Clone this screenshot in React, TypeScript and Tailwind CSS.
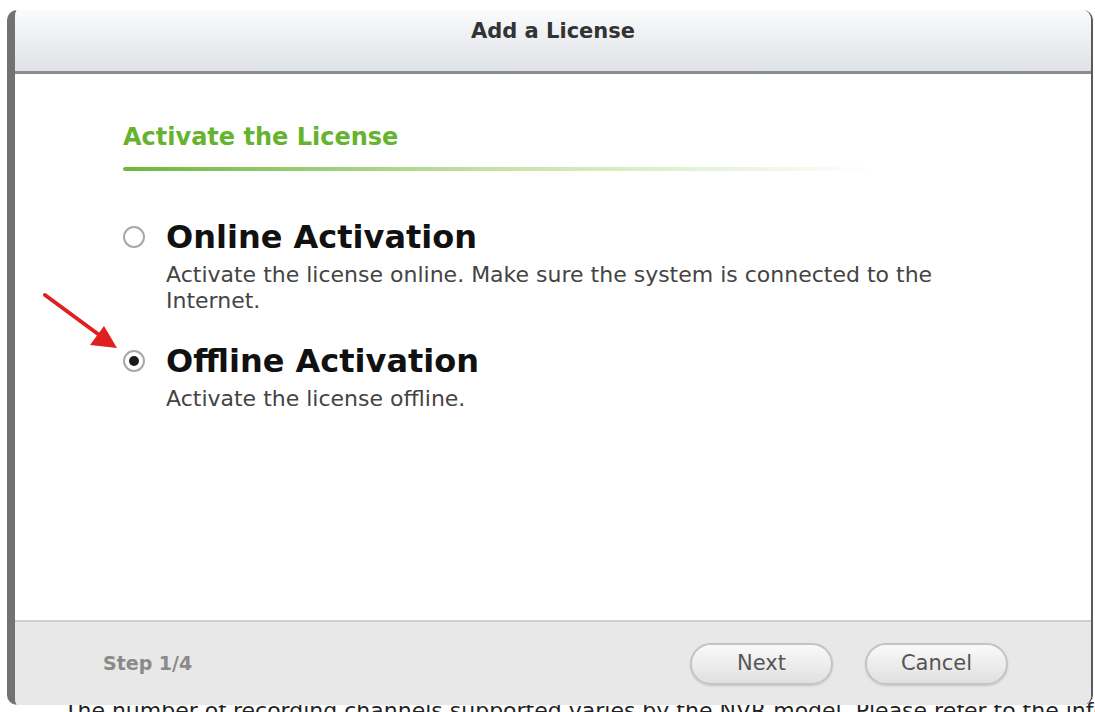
import React from "react";

function Radio({ checked }: { checked?: boolean }) {
  return (
    <span className="flex h-[22px] w-[22px] shrink-0 items-center justify-center rounded-full border-2 border-[#a8a8a8] bg-white">
      {checked && <span className="h-[10px] w-[10px] rounded-full bg-[#1a1a1a]" />}
    </span>
  );
}

function PillButton({ label }: { label: string }) {
  return (
    <button className="h-[42px] w-[143px] rounded-full border-2 border-[#c4c4c4] bg-gradient-to-b from-[#fafafa] to-[#e0e0e0] text-[21px] text-[#555] shadow-[0_1px_2px_rgba(0,0,0,0.15)]">
      {label}
    </button>
  );
}

const options = [
  {
    title: "Online Activation",
    desc: "Activate the license online. Make sure the system is connected to the Internet.",
    checked: false,
  },
  {
    title: "Offline Activation",
    desc: "Activate the license offline.",
    checked: true,
  },
];

export default function App() {
  return (
    <div className="relative h-[712px] w-[1095px] overflow-hidden bg-white font-['DejaVu_Sans',sans-serif]">
      <div className="relative z-10 ml-[7px] mt-[10px] flex h-[695px] w-[1086px] flex-col overflow-hidden rounded-[10px] border-l-[8px] border-r-2 border-l-[#727272] border-r-[#5a5a5a] bg-white">
        {/* title bar */}
        <div className="flex h-[64px] shrink-0 justify-center border-b-[3px] border-[#8c8c8c] bg-gradient-to-b from-[#fafbfc] to-[#dfe2e6] pt-[7px]">
          <span className="text-[21px] font-bold leading-[28px] text-[#333]">Add a License</span>
        </div>

        {/* body */}
        <div className="flex-1 pl-[108px] pt-[48px]">
          <h2 className="text-[24px] font-bold leading-[30px] text-[#66b32e]">Activate the License</h2>
          <div className="mt-[15px] h-[4px] w-[750px] rounded-full bg-gradient-to-r from-[#6fb63a] via-[#c6e3a8] to-transparent" />

          <div className="mt-[48px] flex flex-col gap-[29px]">
            {options.map((o) => (
              <div key={o.title} className="flex gap-[21px]">
                <div className="pt-[7px]">
                  <Radio checked={o.checked} />
                </div>
                <div>
                  <div className="text-[32px] font-bold leading-[36px] text-[#111]">{o.title}</div>
                  <p className="mt-[7px] w-[800px] text-[22px] leading-[26px] text-[#444]">{o.desc}</p>
                </div>
              </div>
            ))}
          </div>
        </div>

        {/* footer */}
        <div className="flex h-[85px] shrink-0 items-center border-t-2 border-[#cfcfcf] bg-[#e8e8e8] pl-[88px] pr-[83px]">
          <span className="text-[19px] font-bold text-[#8a8a8a]">Step 1/4</span>
          <div className="ml-auto flex gap-[32px]">
            <PillButton label="Next" />
            <PillButton label="Cancel" />
          </div>
        </div>
      </div>

      {/* text behind the dialog */}
      <p className="-mt-[6px] whitespace-nowrap pl-[64px] text-[22px] leading-[24px] text-[#222]">
        The number of recording channels supported varies by the NVR model. Please refer to the information
      </p>

      {/* annotation arrow */}
      <svg className="absolute left-[40px] top-[290px] z-20" width="82" height="64" viewBox="0 0 82 64">
        <line x1="5" y1="5" x2="62" y2="47" stroke="#e02020" strokeWidth="4" strokeLinecap="round" />
        <polygon points="77,58 50,55 64,36" fill="#e02020" />
      </svg>
    </div>
  );
}
